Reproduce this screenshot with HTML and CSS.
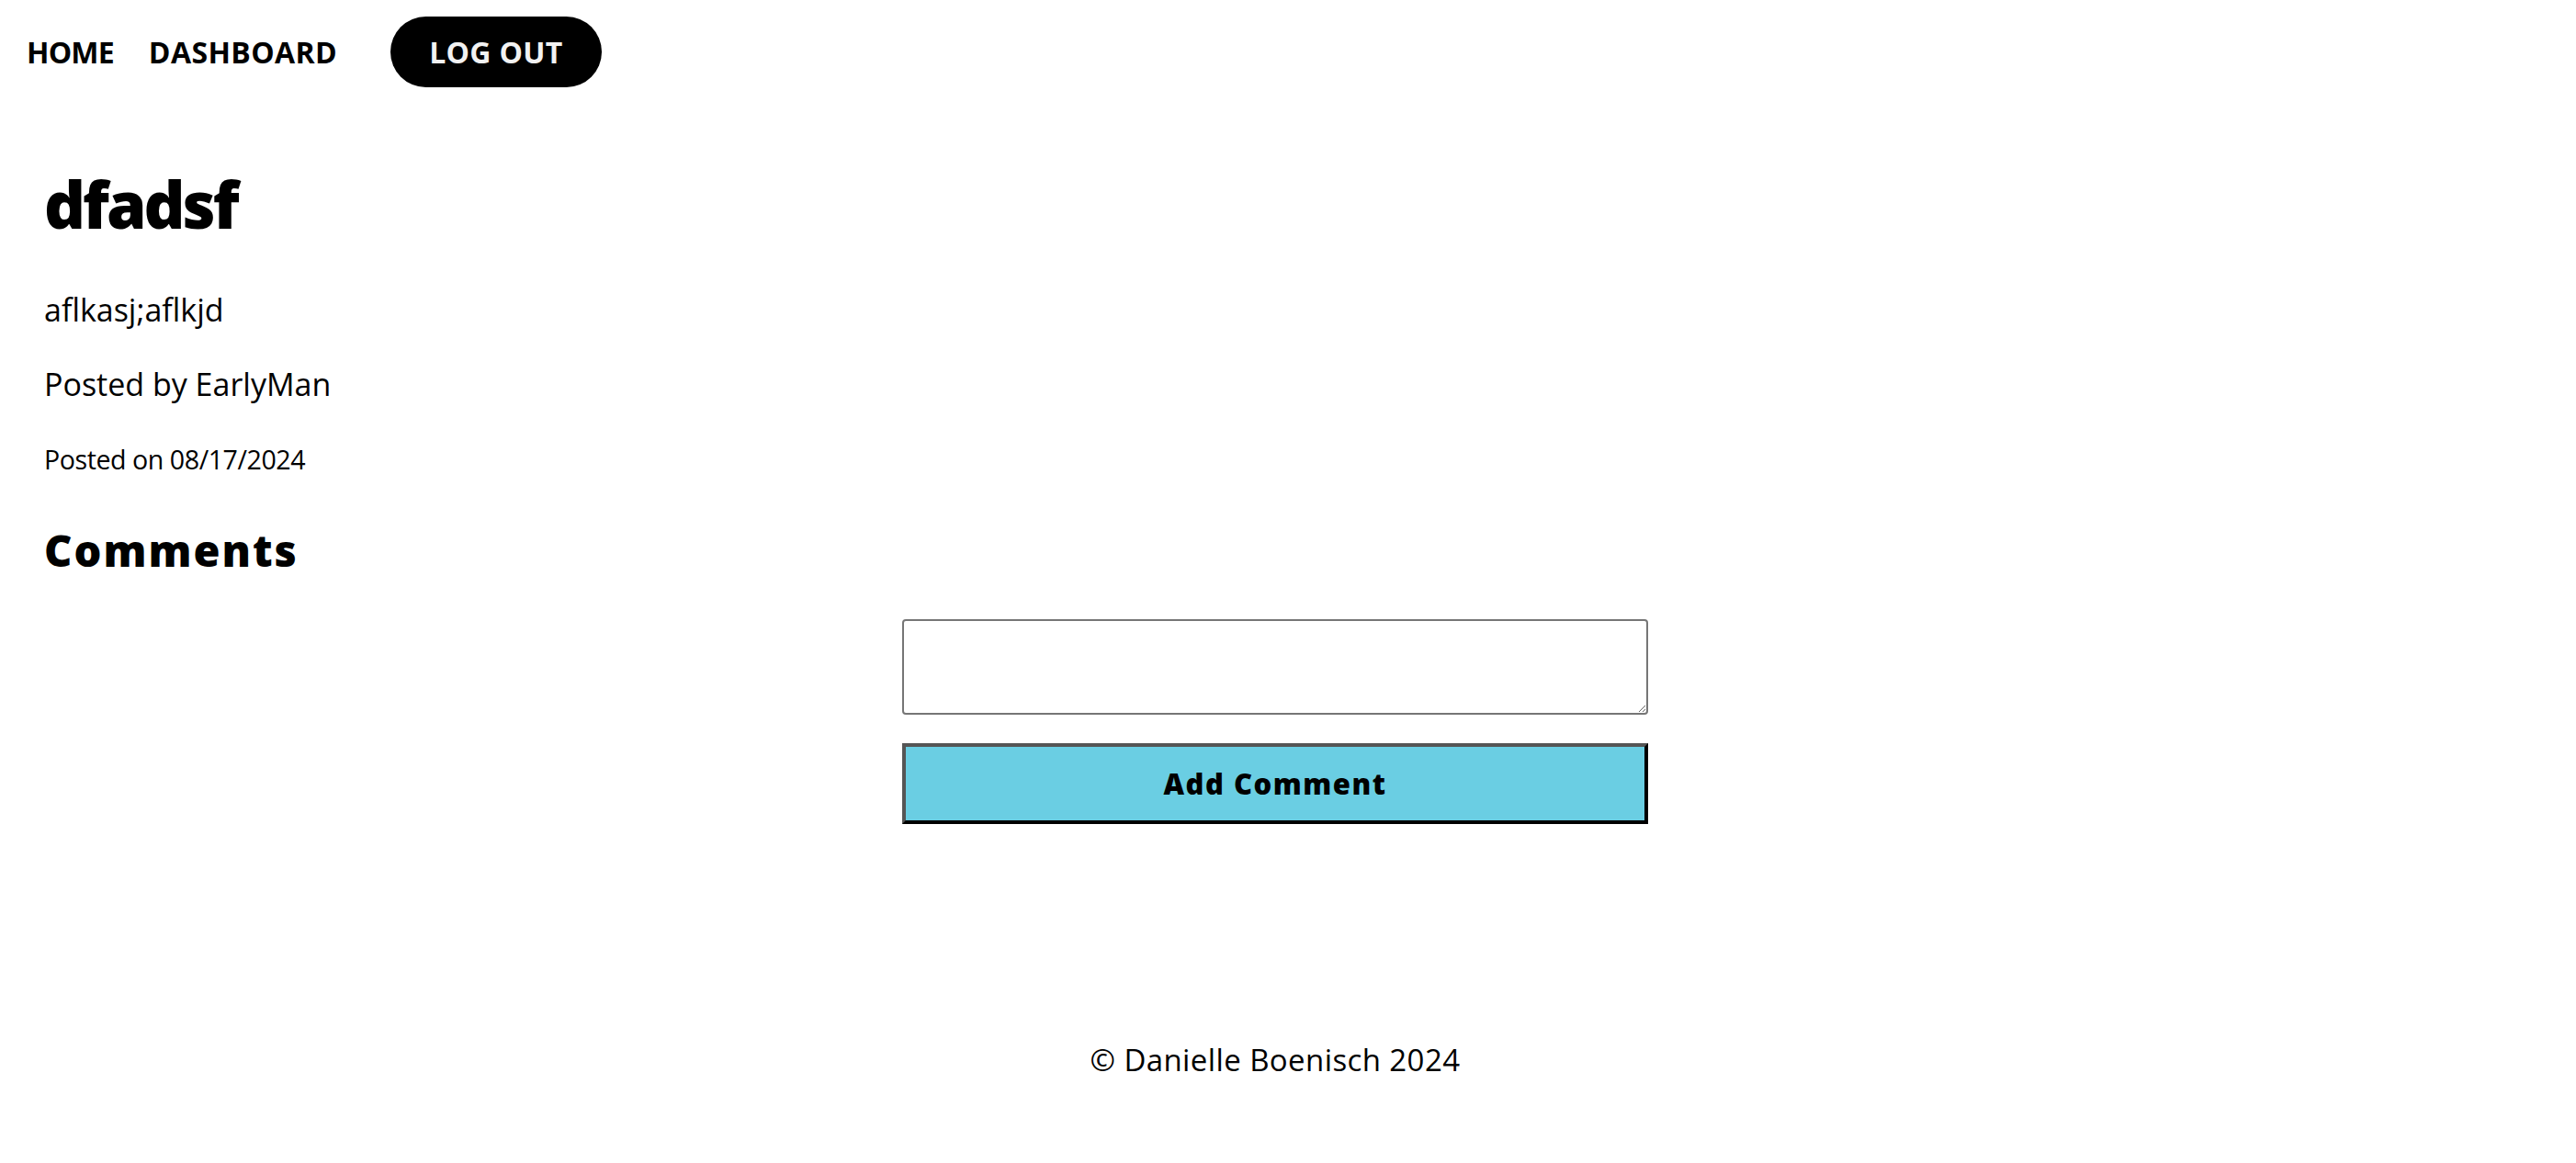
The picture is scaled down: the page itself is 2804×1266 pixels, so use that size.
FILE: index.html
```html
<!DOCTYPE html>
<html lang="en">
<head>
<meta charset="utf-8">
<title>dfadsf</title>
<link rel="stylesheet" href="styles.css">
</head>
<body>
<header class="nav">
  <a class="nav-link" href="#">HOME</a>
  <a class="nav-link" href="#">DASHBOARD</a>
  <button class="logout" type="button">LOG OUT</button>
</header>
<main class="post">
  <h1 class="post-title">dfadsf</h1>
  <p class="post-body">aflkasj;aflkjd</p>
  <p class="post-author">Posted by EarlyMan</p>
  <p class="post-date">Posted on 08/17/2024</p>
  <h2 class="comments-title">Comments</h2>
  <form class="comment-form">
    <textarea class="comment-input"></textarea>
    <button class="comment-submit" type="button">Add Comment</button>
  </form>
</main>
<footer class="footer">© Danielle Boenisch 2024</footer>
</body>
</html>
```

FILE: styles.css
```css
* { box-sizing: border-box; }
html, body { margin: 0; padding: 0; background: #fff; }
body {
  font-family: "Open Sans", "Noto Sans", sans-serif;
  color: #000;
}
.nav {
  display: flex;
  align-items: center;
  padding: 18px 0 0 29px;
  height: 95px;
}
.nav-link {
  font-size: 32px;
  font-weight: 700;
  color: #000;
  text-decoration: none;
  line-height: 1;
  margin-right: 38px;
}
.nav-link:first-child { letter-spacing: -0.8px; }
.nav-link + .nav-link { margin-right: 58px; letter-spacing: 0.4px; }
.logout {
  height: 77px;
  padding: 0 42px;
  border: none;
  border-radius: 40px;
  background: #000;
  color: #f2f2f2;
  font-family: inherit;
  font-size: 32px;
  font-weight: 700;
  line-height: 1;
  letter-spacing: 0.3px;
}
.post {
  padding: 85px 0 0 48px;
  display: flex;
  flex-direction: column;
}
.post h1, .post h2, .post p { margin: 0; line-height: 1.2; }
.post-title { font-size: 70px; font-weight: 800; letter-spacing: -3px; }
.post-body { font-size: 34px; margin-top: 53px !important; }
.post-author { font-size: 34px; margin-top: 40px !important; }
.post-date { font-size: 28.6px; margin-top: 44.5px !important; letter-spacing: -0.45px; }
.comments-title { font-size: 47px; font-weight: 800; margin-top: 54px !important; letter-spacing: 2px; }
.comment-form {
  margin: 46px 0 0 -48px;
  padding-right: 28px;
  display: flex;
  flex-direction: column;
  align-items: center;
  gap: 31px;
}
.comment-input {
  width: 812px;
  height: 104px;
  border: 2px solid #767676;
  border-radius: 4px;
  font-family: inherit;
  font-size: 28px;
}
.comment-submit {
  width: 812px;
  height: 88px;
  background: #6acee3;
  border: 4px solid;
  border-color: #555 #000 #000 #555;
  font-family: inherit;
  font-size: 31px;
  font-weight: 800;
  letter-spacing: 1.5px;
  color: #000;
}
.footer {
  margin-top: 237px;
  padding-right: 28px;
  text-align: center;
  font-size: 33px;
  line-height: 1.2;
  letter-spacing: 0.4px;
}
```
